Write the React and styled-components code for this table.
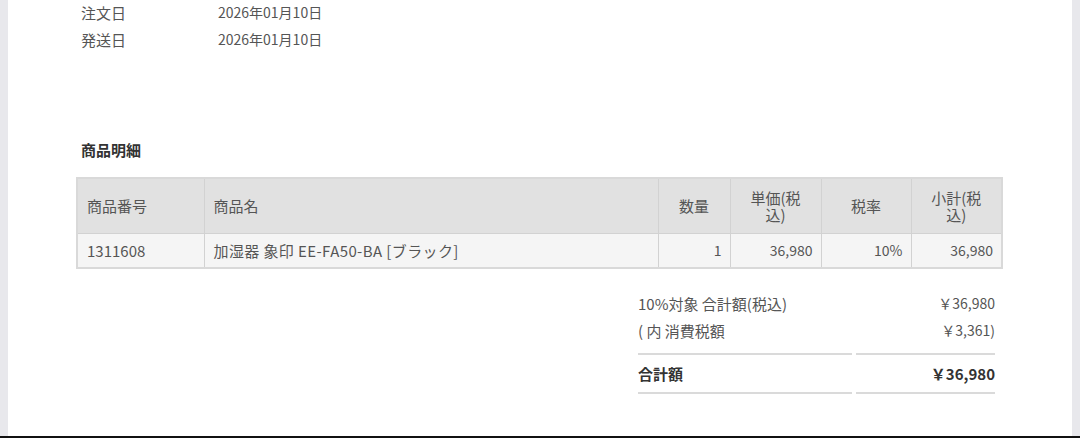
import React from "react";
import styled, { createGlobalStyle } from "styled-components";

const GlobalStyle = createGlobalStyle`
  html, body {
    margin: 0;
    padding: 0;
    background: #e8e8ec;
  }
  body {
    font-family: "Noto Sans CJK JP", "Noto Sans", sans-serif;
    color: #555;
  }
`;

const Frame = styled.div`
  height: 438px;
  display: flex;
  flex-direction: column;
  overflow: hidden;
`;

const Sheet = styled.div`
  flex: 1;
  margin: 0 8px;
  background: #fff;
  padding: 0 71px 0 68px;
  display: flex;
  flex-direction: column;
`;

const BottomBar = styled.div`
  height: 2px;
  background: #111;
`;

const DateList = styled.dl`
  margin: -1px 0 0 5px;
  display: grid;
  grid-template-columns: 137px auto;
  grid-auto-rows: 27px;
  align-items: center;
  font-size: 14px;
  line-height: 27px;
`;

const DateLabel = styled.dt`
  margin: 0;
  font-size: 15px;
`;

const DateValue = styled.dd`
  margin: 0;
`;

const SectionTitle = styled.h3`
  margin: 86px 0 16px 5px;
  font-size: 15px;
  font-weight: 700;
  color: #333;
  line-height: 22px;
`;

const ItemTable = styled.table`
  width: 925px;
  table-layout: fixed;
  border-collapse: collapse;
  border: 2px solid #d9d9d9;
`;

const HeadCell = styled.th`
  background: #e1e1e1;
  font-weight: 400;
  font-size: 15px;
  color: #555;
  height: 55px;
  padding: 4px 12px 4px 9px;
  line-height: 17px;
  border: 1px solid #d2d2d2;
  text-align: ${(p) => (p.$align === "left" ? "left" : "center")};
  ${(p) => (p.$align === "left" ? "" : "padding-left: 12px;")}
  box-sizing: border-box;
`;

const BodyCell = styled.td`
  background: #f5f5f5;
  height: 35px;
  padding: 0 8px 0 9px;
  border: 1px solid #d2d2d2;
  font-size: ${(p) => (p.$numeric ? "14px" : "15px")};
  letter-spacing: ${(p) => (p.$wide ? "0.4px" : "0")};
  text-align: ${(p) => (p.$numeric ? "right" : "left")};
  box-sizing: border-box;
`;

const Totals = styled.table`
  align-self: flex-end;
  margin: 21px 2px 0 0;
  width: 365px;
  border-collapse: separate;
  border-spacing: 4px 0;
`;

const TotalCell = styled.td`
  padding: 0;
  height: 27px;
  line-height: 27px;
  font-size: ${(p) => (p.$numeric ? "14px" : "15px")};
  text-align: ${(p) => (p.$numeric ? "right" : "left")};
  ${(p) => (p.$numeric ? "" : "width: 214px;")}
`;

const SubCell = styled(TotalCell)`
  height: 36px;
  vertical-align: top;
  border-bottom: 2px solid #dadada;
`;

const GrandCell = styled(TotalCell)`
  height: 37px;
  font-size: 15px;
  font-weight: 700;
  color: #333;
  border-bottom: 2px solid #dadada;
`;

const columns = [
  { label: "商品番号", width: 127, align: "left" },
  { label: "商品名", width: 454, align: "left" },
  { label: "数量", width: 72 },
  { label: "単価(税込)", width: 91 },
  { label: "税率", width: 90 },
  { label: "小計(税込)", width: 91 },
];

const items = [
  {
    code: "1311608",
    name: "加湿器 象印 EE-FA50-BA [ブラック]",
    qty: "1",
    price: "36,980",
    rate: "10%",
    subtotal: "36,980",
  },
];

export default function App() {
  return (
    <>
      <GlobalStyle />
      <Frame>
        <Sheet>
          <DateList>
            <DateLabel>注文日</DateLabel>
            <DateValue>2026年01月10日</DateValue>
            <DateLabel>発送日</DateLabel>
            <DateValue>2026年01月10日</DateValue>
          </DateList>

          <SectionTitle>商品明細</SectionTitle>

          <ItemTable>
            <colgroup>
              {columns.map((c) => (
                <col key={c.label} style={{ width: c.width }} />
              ))}
            </colgroup>
            <thead>
              <tr>
                {columns.map((c) => (
                  <HeadCell key={c.label} $align={c.align}>
                    {c.label}
                  </HeadCell>
                ))}
              </tr>
            </thead>
            <tbody>
              {items.map((it) => (
                <tr key={it.code}>
                  <BodyCell>{it.code}</BodyCell>
                  <BodyCell $wide>{it.name}</BodyCell>
                  <BodyCell $numeric>{it.qty}</BodyCell>
                  <BodyCell $numeric>{it.price}</BodyCell>
                  <BodyCell $numeric>{it.rate}</BodyCell>
                  <BodyCell $numeric>{it.subtotal}</BodyCell>
                </tr>
              ))}
            </tbody>
          </ItemTable>

          <Totals>
            <tbody>
              <tr>
                <TotalCell>10%対象 合計額(税込)</TotalCell>
                <TotalCell $numeric>￥36,980</TotalCell>
              </tr>
              <tr>
                <SubCell>( 内 消費税額</SubCell>
                <SubCell $numeric>￥3,361)</SubCell>
              </tr>
              <tr>
                <GrandCell>合計額</GrandCell>
                <GrandCell $numeric>￥36,980</GrandCell>
              </tr>
            </tbody>
          </Totals>
        </Sheet>
        <BottomBar />
      </Frame>
    </>
  );
}
